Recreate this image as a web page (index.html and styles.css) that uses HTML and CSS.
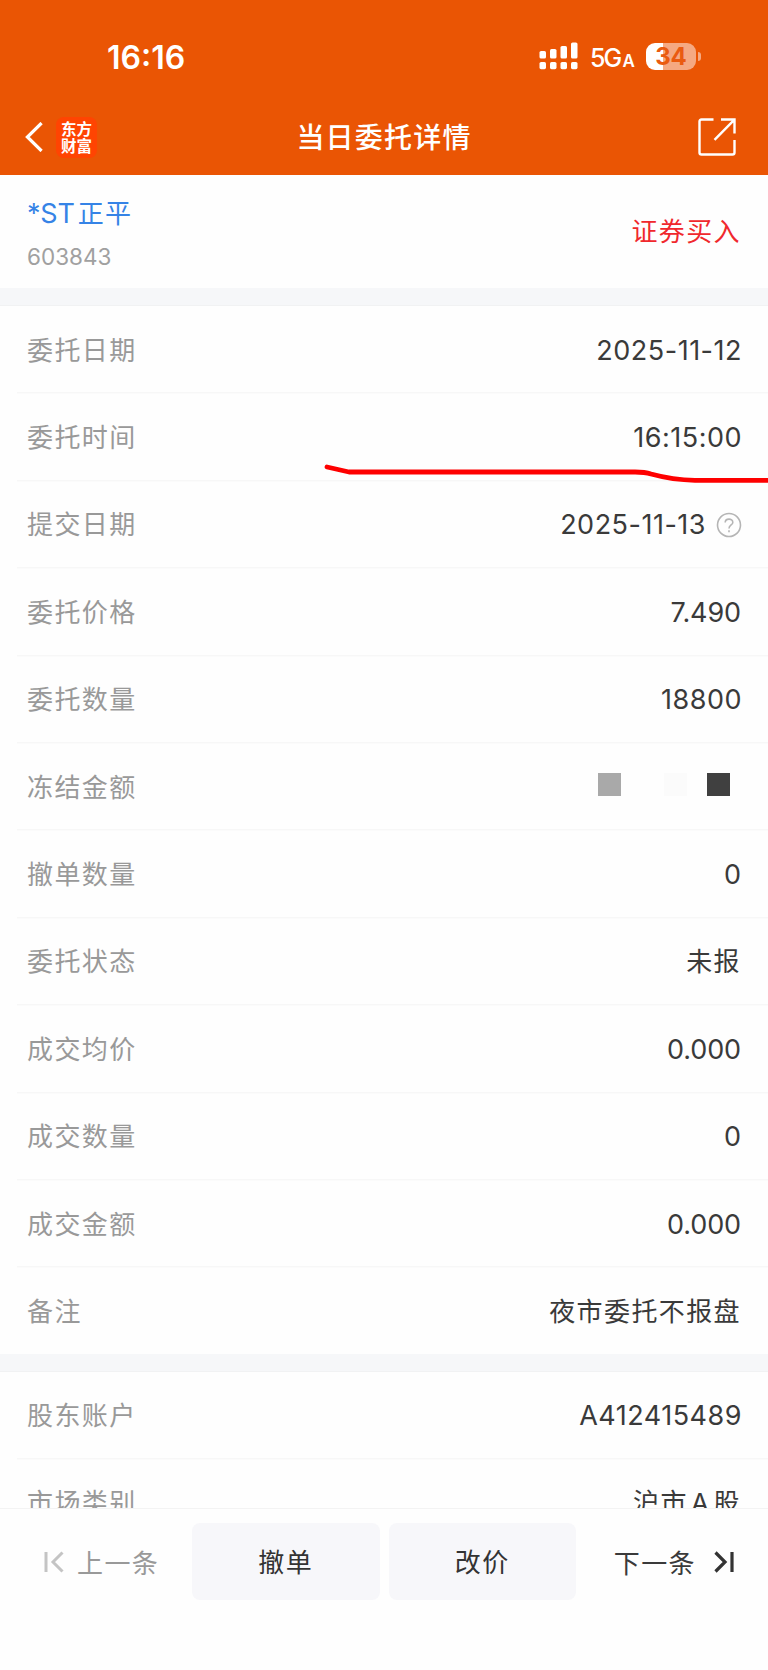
FILE: index.html
```html
<!DOCTYPE html>
<html lang="zh-CN">
  <head>
    <meta charset="utf-8">
    <title>当日委托详情</title>
    <link rel="stylesheet" href="styles.css">
  </head>
  <body>
    <div class="screen">
      <header>
        <div class="status-bar">
          <span class="clock">16:16</span>
          <div class="status-icons">
            <svg class="signal" width="39" height="28" viewBox="0 0 39 28" fill="#fff">
              <rect x="0.5" y="9" width="6.5" height="7.5" rx="1.6"/>
              <rect x="11" y="7" width="6.5" height="9.5" rx="1.6"/>
              <rect x="21.5" y="4" width="6.5" height="12.5" rx="1.6"/>
              <rect x="32" y="0.5" width="6.5" height="16" rx="1.6"/>
              <rect x="0.5" y="20" width="6.5" height="7.2" rx="1.6"/>
              <rect x="11" y="20" width="6.5" height="7.2" rx="1.6"/>
              <rect x="21.5" y="20" width="6.5" height="7.2" rx="1.6"/>
              <rect x="32" y="20" width="6.5" height="7.2" rx="1.6"/>
            </svg>
            <span class="network">5G<small>A</small></span>
            <span class="battery">34</span>
            <span class="battery-tip"></span>
          </div>
        </div>
        <nav class="nav-bar">
          <div class="nav-left">
            <svg width="18" height="30" viewBox="0 0 18 30" fill="none" stroke="#fff" stroke-width="3.2">
              <path d="M16.6 1 L2.4 15 L16.6 29"/>
            </svg>
            <div class="logo">
              <span>东方</span>
              <span>财富</span>
            </div>
          </div>
          <h1>当日委托详情</h1>
          <svg class="share" width="38" height="38" viewBox="0 0 38 38" fill="none" stroke="#fff" stroke-width="2.4">
            <path d="M15.5 1.5 H3.5 Q1.5 1.5 1.5 3.5 V34.5 Q1.5 36.5 3.5 36.5 H34.5 Q36.5 36.5 36.5 34.5 V22"/>
            <path d="M23 1.5 H36.5 V15.5 M36.2 1.8 L16.5 21.8"/>
          </svg>
        </nav>
      </header>

      <section class="stock">
        <div>
          <div class="stock-name"><span class="st">*ST</span>正平</div>
          <div class="stock-code">603843</div>
        </div>
        <div class="side">证券买入</div>
      </section>

      <dl class="details">
        <div class="row"><dt>委托日期</dt><dd class="num date">2025-11-12</dd></div>
        <div class="row"><dt>委托时间</dt><dd class="num date">16:15:00</dd></div>
        <div class="row">
          <dt>提交日期</dt>
          <dd class="num date">2025-11-13
            <svg class="help" width="26" height="26" viewBox="0 0 26 26" fill="none" stroke="#b5b5b5" stroke-width="1.6">
              <circle cx="13" cy="13" r="11.5"/>
              <path d="M9.2 10.6 C9.2 6 16.8 6 16.8 10.4 C16.8 13 13 13 13 16.4 M13 18.2 V20.2"/>
            </svg>
          </dd>
        </div>
        <div class="row"><dt>委托价格</dt><dd class="num">7.490</dd></div>
        <div class="row"><dt>委托数量</dt><dd class="num date">18800</dd></div>
        <div class="row">
          <dt>冻结金额</dt>
          <dd class="mosaic"><i class="gray"></i><i class="light"></i><i class="dark"></i></dd>
        </div>
        <div class="row"><dt>撤单数量</dt><dd class="num">0</dd></div>
        <div class="row"><dt>委托状态</dt><dd>未报</dd></div>
        <div class="row"><dt>成交均价</dt><dd class="num">0.000</dd></div>
        <div class="row"><dt>成交数量</dt><dd class="num">0</dd></div>
        <div class="row"><dt>成交金额</dt><dd class="num">0.000</dd></div>
        <div class="row"><dt>备注</dt><dd>夜市委托不报盘</dd></div>
      </dl>

      <dl class="details account">
        <div class="row"><dt>股东账户</dt><dd class="num date">A412415489</dd></div>
        <div class="row"><dt>市场类别</dt><dd class="market">沪市 A 股</dd></div>
      </dl>

      <footer>
        <a class="prev">
          <svg width="20" height="22" viewBox="0 0 20 22" fill="none" stroke="#c4c4c4" stroke-width="3">
            <path d="M2 1 V21 M18.5 1.5 L9 11 L18.5 20.5"/>
          </svg>
          <span>上一条</span>
        </a>
        <button><span>撤单</span></button>
        <button><span>改价</span></button>
        <a class="next">
          <span>下一条</span>
          <svg width="20" height="22" viewBox="0 0 20 22" fill="none" stroke="#333" stroke-width="3.2">
            <path d="M18 1 V21 M1.5 1.5 L11 11 L1.5 20.5"/>
          </svg>
        </a>
      </footer>

      <svg class="pen-mark" width="448" height="24" viewBox="0 0 448 24" fill="none" stroke="#fe0000" stroke-width="4.8" stroke-linecap="round" stroke-linejoin="round">
        <path d="M7 7 L29 12 H315 Q325 12 331 14 Q353 20 375 20.3 H460"/>
      </svg>
    </div>
  </body>
</html>
```

FILE: styles.css
```css
* {
  box-sizing: border-box;
}

body {
  margin: 0;
  background: #fefefe;
  color: #3a3a3a;
  font-family: Inter, "Noto Sans CJK SC", sans-serif;
  font-size: 26px;
  letter-spacing: 1.4px;
}

.screen {
  position: relative;
  display: flex;
  flex-direction: column;
  width: 768px;
  height: 1670px;
  overflow: hidden;
}

header {
  flex: none;
  height: 175px;
  background: #ea5504;
  color: #fff;
}

.status-bar {
  display: flex;
  justify-content: space-between;
  align-items: center;
  height: 112px;
  padding: 0 67px 0 107px;
}

.clock {
  padding-top: 2px;
  font-size: 32px;
  font-weight: 600;
  letter-spacing: 0;
}

.status-icons {
  display: flex;
  align-items: center;
}

.network {
  margin: 3px 13px 0 12px;
  font-size: 25px;
  font-weight: 500;
  letter-spacing: -1.8px;
}

.network small {
  margin-left: 2px;
  font-size: 17px;
  font-weight: 600;
}

.battery {
  width: 50px;
  height: 27px;
  border-radius: 9px;
  background: linear-gradient(90deg, #fff 34%, #f5a982 34%);
  color: #ea5b10;
  font-size: 24px;
  font-weight: 700;
  line-height: 27px;
  letter-spacing: 0;
  text-align: center;
}

.battery-tip {
  width: 3px;
  height: 9px;
  margin-left: 2px;
  border-radius: 0 3px 3px 0;
  background: #f5a982;
}

.nav-bar {
  display: grid;
  grid-template-columns: 1fr auto 1fr;
  align-items: center;
  height: 50px;
  padding: 0 32px 0 25px;
}

.nav-left {
  display: flex;
  align-items: center;
  gap: 13px;
}

.logo {
  display: flex;
  flex-direction: column;
  align-items: center;
  justify-content: center;
  gap: 1px;
  width: 41px;
  height: 41px;
  padding-bottom: 2px;
  border-radius: 8px;
  background: #ff4402;
  font-family: "Noto Sans CJK SC", sans-serif;
  font-size: 15.5px;
  font-weight: 700;
  line-height: 16px;
  letter-spacing: 0;
}

h1 {
  margin: 0;
  padding: 0 0 2px 7px;
  font-size: 28px;
  font-weight: 500;
  letter-spacing: 1.2px;
}

.share {
  justify-self: end;
}

.stock {
  display: flex;
  flex: none;
  justify-content: space-between;
  align-items: center;
  height: 113px;
  padding: 0 27px;
}

.stock-name {
  padding-top: 7px;
  color: #3583e6;
  line-height: 40px;
}

.st {
  margin-right: 3px;
  font-size: 27px;
  letter-spacing: -0.2px;
}

.stock-code {
  margin-top: 3px;
  color: #a0a0a0;
  font-size: 22.5px;
  line-height: 40px;
  letter-spacing: 0;
}

.side {
  padding-bottom: 5px;
  color: #f0282d;
}

.details {
  flex: none;
  margin: 0;
  border-top: 17px solid #f6f7f9;
  box-shadow: inset 0 1px #f1f2f3;
}

.row {
  display: flex;
  justify-content: space-between;
  align-items: center;
  height: 87.4px;
  margin-left: 17px;
  padding: 2px 27px 0 10px;
  box-shadow: 0 1.5px #f7f7f7;
}

dt,
dd {
  padding-bottom: 3px;
}

dt {
  color: #999;
}

dd {
  display: flex;
  align-items: center;
  margin: 0;
}

.num {
  padding: 1px 0 0;
  font-size: 27px;
  letter-spacing: -0.1px;
}

.date {
  margin-right: -1px;
  letter-spacing: 0.5px;
}

.market {
  word-spacing: -5.5px;
}

.help {
  margin: 0 0 0 10px;
}

.mosaic {
  padding-bottom: 4px;
}

.mosaic i {
  width: 23px;
  height: 23px;
}

.mosaic .gray {
  margin-right: 43px;
  background: #a9a9a9;
}

.mosaic .light {
  margin-right: 20px;
  background: #fbfbfb;
}

.mosaic .dark {
  margin-right: 11px;
  background: #404040;
}

.account {
  height: 154.5px;
  overflow: hidden;
}

.account .row:last-child {
  padding-top: 0;
}

footer {
  display: flex;
  flex: 1;
  align-items: flex-start;
  gap: 9px;
  padding: 14px 34px 0 44px;
  border-top: 1px solid #f3f3f3;
  background: #fefefe;
}

footer a {
  display: flex;
  align-items: center;
  height: 78px;
}

footer span {
  padding-bottom: 2px;
}

.prev {
  gap: 13px;
  width: 139px;
  color: #999;
}

.next {
  gap: 18px;
  margin-left: auto;
}

button {
  display: flex;
  align-items: center;
  justify-content: center;
  width: 187.5px;
  height: 77px;
  border: none;
  border-radius: 8px;
  background: #f7f7fa;
  color: #333;
  font: inherit;
  letter-spacing: inherit;
}

.pen-mark {
  position: absolute;
  top: 460px;
  left: 320px;
}
```
